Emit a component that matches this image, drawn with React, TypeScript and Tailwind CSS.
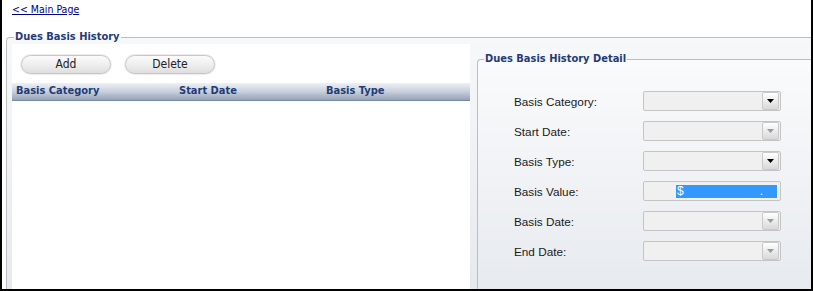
import React from "react";

const tahoma = { fontFamily: '"DejaVu Sans Condensed", "Liberation Sans", Arial, sans-serif' };
const arial = { fontFamily: '"Liberation Sans", Arial, sans-serif' };

function Arrow({ enabled }: { enabled: boolean }) {
  return (
    <div className="flex h-[18px] w-[17px] items-center justify-center rounded-[2px] border border-[#c9c9c9] bg-gradient-to-b from-[#ffffff] to-[#d9d9d9]">
      <svg width="7" height="4" viewBox="0 0 7 4">
        <path d="M0 0 H7 L3.5 4 Z" fill={enabled ? "#000" : "#9a9a9a"} />
      </svg>
    </div>
  );
}

function Field({ label, kind, enabled }: { label: string; kind: "select" | "money"; enabled?: boolean }) {
  return (
    <div className="flex h-[30px] items-start">
      <div className="w-[129px] pt-[4px] text-[11.75px] leading-[14px] text-[#1a1a1a]" style={arial}>
        {label}
      </div>
      {kind === "select" ? (
        <div className="flex h-[20px] w-[138px] items-center justify-end rounded-[2px] border border-[#c4c4c4] bg-[#f0f0f0] pr-px">
          <Arrow enabled={!!enabled} />
        </div>
      ) : (
        <div className="flex h-[20px] w-[138px] items-center rounded-[2px] border border-[#c4c4c4] bg-[#f0f0f0] pl-[32px] pr-[3px]">
          <div className="flex h-[13px] flex-1 items-end justify-between bg-[#3399ff] pl-px pr-[14px] text-[12px] leading-[13px] text-white" style={arial}>
            <span>$</span>
            <span>.</span>
          </div>
        </div>
      )}
    </div>
  );
}

function PillButton({ children }: { children: React.ReactNode }) {
  return (
    <button
      className="h-[19px] w-[90px] rounded-full border border-[#c6c6c6] bg-gradient-to-b from-[#fbfbfb] via-[#efefef] to-[#dedede] text-[12px] leading-[17px] text-[#222] shadow-[0_0_0_1px_#eeeeee]"
      style={tahoma}
    >
      {children}
    </button>
  );
}

export default function App() {
  return (
    <div className="flex h-[291px] w-[813px] flex-col overflow-hidden border-x-2 border-b-2 border-black bg-white">
      <div className="h-[30px] pl-[10px] pt-[2px] text-[10.5px] leading-[14px]">
        <a href="#" className="text-[#00008b] underline" style={tahoma}>
          &lt;&lt; Main Page
        </a>
      </div>
      <fieldset className="ml-[4px] flex min-h-0 flex-1 rounded-tl-[4px] border-l border-t border-[#bdbdbd] bg-gradient-to-b from-[#f7f8fa] to-[#e6e9ee] pb-0 pl-[5px]">
        <legend className="ml-[2px] px-px text-[11px] font-bold leading-[14px] text-[#1f3c78]" style={tahoma}>
          Dues Basis History
        </legend>
        <div className="flex w-full">
          <div className="flex w-[458px] flex-col bg-white pt-[11px]">
            <div className="flex gap-[14px] pl-[9px]">
              <PillButton>Add</PillButton>
              <PillButton>Delete</PillButton>
            </div>
            <div className="mt-[9px] flex h-[18px] items-center border-b border-[#7b8aa3] bg-gradient-to-b from-[#eef0f5] via-[#c9d0dc] to-[#94a2b8] text-[11px] font-bold text-[#1f3c78]" style={tahoma}>
              <div className="w-[167px] pl-[4px]">Basis Category</div>
              <div className="w-[147px]">Start Date</div>
              <div>Basis Type</div>
            </div>
          </div>
          <div className="flex flex-1 flex-col pl-[7px] pt-[8px]">
            <fieldset className="flex-1 rounded-tl-[4px] border-l border-t border-[#bdbdbd] bg-gradient-to-b from-[#fafbfc] to-[#e7eaef]">
              <legend className="ml-[6px] px-px text-[11px] font-bold leading-[14px] text-[#1f3c78]" style={tahoma}>
                Dues Basis History Detail
              </legend>
              <div className="pl-[36px] pt-[25px]">
                <Field label="Basis Category:" kind="select" enabled />
                <Field label="Start Date:" kind="select" />
                <Field label="Basis Type:" kind="select" enabled />
                <Field label="Basis Value:" kind="money" />
                <Field label="Basis Date:" kind="select" />
                <Field label="End Date:" kind="select" />
              </div>
            </fieldset>
          </div>
        </div>
      </fieldset>
    </div>
  );
}
